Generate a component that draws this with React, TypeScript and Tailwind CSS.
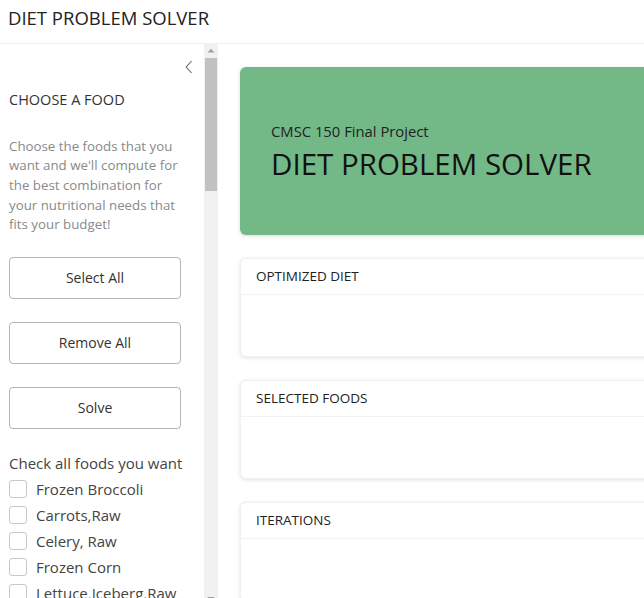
import React from 'react';

const foods = [
  'Frozen Broccoli', 'Carrots,Raw', 'Celery, Raw', 'Frozen Corn', 'Lettuce,Iceberg,Raw',
  'Peppers, Sweet, Raw', 'Potatoes, Baked', 'Tofu', 'Roasted Chicken', 'Spaghetti W/ Sauce',
  'Tomato,Red,Ripe,Raw', 'Apple,Raw,W/Skin', 'Banana', 'Grapes', 'Kiwifruit,Raw,Fresh',
  'Oranges', 'Bagels', 'Wheat Bread', 'White Bread', 'Oatmeal Cookies', 'Apple Pie',
  'Chocolate Chip Cookies', 'Butter,Regular', 'Cheddar Cheese', '3.3% Fat,Whole Milk',
  '2% Lowfat Milk', 'Skim Milk', 'Poached Eggs', 'Scrambled Eggs', 'Bologna,Turkey',
  'Frankfurter, Beef', 'Ham,Sliced,Extralean', 'Kielbasa,Prk', "Cap'N Crunch", 'Cheerios',
  "Corn Flks, Kellogg'S", "Raisin Brn, Kellg'S", 'Rice Krispies', 'Special K', 'Oatmeal',
  'Malt-O-Meal,Choc', 'Pizza W/Pepperoni', 'Taco', 'Hamburger W/Toppings', 'Hotdog, Plain',
  'Couscous', 'White Rice', 'Macaroni,Ckd', 'Peanut Butter', 'Pork', 'Sardines in Oil',
  'White Tuna in Water', 'Popcorn,Air-Popped', 'Potato Chips,Bbqflvr', 'Pretzels',
  'Tortilla Chip', 'Chicknoodl Soup', 'Splt Pea&Hamsoup', 'Vegetbeef Soup',
  'Neweng Clamchwd', 'Tomato Soup', 'New E Clamchwd,W/Mlk', 'Crm Mshrm Soup,W/Mlk',
  'Beanbacn Soup,W/Watr',
];

const SideButton = ({ label }: { label: string }) => (
  <button className="w-[172px] h-[42px] border border-[#b5b5b5] rounded-[4px] bg-white text-[14px] text-[#333]">
    {label}
  </button>
);

const Panel = ({ title }: { title: string }) => (
  <div className="w-[560px] h-[99px] shrink-0 bg-white rounded-[6px] border border-[#f0f0f0] shadow-[0_1px_4px_rgba(0,0,0,0.12)] flex flex-col">
    <div className="h-[36px] flex items-center px-[15px] border-b border-[#f2f2f2] text-[13.5px] text-[#222]">
      {title}
    </div>
    <div className="flex-1" />
  </div>
);

export default function App() {
  return (
    <div className="w-[644px] h-[598px] overflow-hidden bg-white font-['Open_Sans',sans-serif] text-[#333]">
      <header className="h-[44px] flex items-center px-[8px] border-b border-[#f0f0f0]">
        <h1 className="text-[18.5px] text-[#222] -mt-[8px]">DIET PROBLEM SOLVER</h1>
      </header>
      <div className="flex h-[560px]">
        <aside className="w-[204px] shrink-0 h-full overflow-hidden">
          <div className="flex flex-col pl-[9px] pr-[23px]">
            <div className="pt-[16px] pl-[176px]">
              <svg width="8" height="14" viewBox="0 0 8 14">
                <path d="M6.5 1 L1.2 7 L6.5 13" fill="none" stroke="#666" strokeWidth="1.1" />
              </svg>
            </div>
            <h2 className="mt-[15px] text-[14.5px] text-[#333]">CHOOSE A FOOD</h2>
            <p className="mt-[26px] text-[13.3px] leading-[19.6px] text-[#8a8a8a]">
              Choose the foods that you want and we'll compute for the best combination for your nutritional needs that fits your budget!
            </p>
            <div className="mt-[22px] flex flex-col gap-[23px]">
              <SideButton label="Select All" />
              <SideButton label="Remove All" />
              <SideButton label="Solve" />
            </div>
            <div className="mt-[23px] text-[15px] text-[#444] whitespace-nowrap">Check all foods you want</div>
            <ul className="mt-[2px] flex flex-col">
              {foods.map((f) => (
                <li key={f} className="h-[26px] flex items-center gap-[9px]">
                  <span className="w-[18px] h-[18px] shrink-0 border border-[#c8c8c8] rounded-[3px] bg-white" />
                  <span className="text-[15px] text-[#444] whitespace-nowrap">{f}</span>
                </li>
              ))}
            </ul>
          </div>
        </aside>
        <div className="w-[14px] shrink-0 h-full bg-[#f1f1f1] flex flex-col items-center">
          <svg width="8" height="5" viewBox="0 0 8 5" className="mt-[4px]">
            <path d="M0.5 4.5 L4 0.8 L7.5 4.5 Z" fill="#a3a3a3" />
          </svg>
          <div className="mt-[5px] w-[12px] h-[133px] bg-[#c1c1c1]" />
          <div className="flex-1" />
          <svg width="8" height="5" viewBox="0 0 8 5" className="mb-[2px]">
            <path d="M0.5 0.5 L4 4.2 L7.5 0.5 Z" fill="#505050" />
          </svg>
        </div>
        <main className="flex-1 min-w-0 overflow-hidden pl-[22px] pt-[23px] flex flex-col gap-[23px]">
          <div className="w-[560px] h-[168px] shrink-0 rounded-[6px] bg-[#73b988] shadow-[0_1px_4px_rgba(0,0,0,0.15)] flex flex-col justify-center pl-[31px] pt-[2px]">
            <div className="text-[14.8px] text-[#222]">CMSC 150 Final Project</div>
            <div className="text-[29.5px] text-[#111] leading-[40px] mt-[2px]">DIET PROBLEM SOLVER</div>
          </div>
          <Panel title="OPTIMIZED DIET" />
          <Panel title="SELECTED FOODS" />
          <Panel title="ITERATIONS" />
        </main>
      </div>
    </div>
  );
}
